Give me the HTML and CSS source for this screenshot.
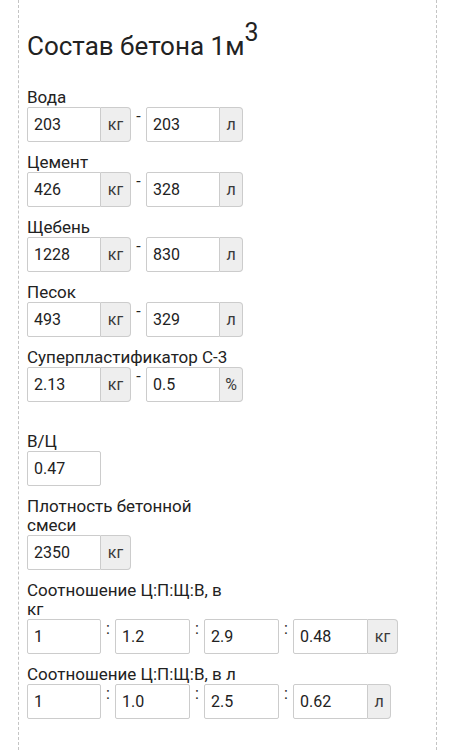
FILE: index.html
```html
<!DOCTYPE html>
<html lang="ru">
<head>
<meta charset="utf-8">
<title>Состав бетона</title>
<link rel="stylesheet" href="styles.css">
</head>
<body>
<div class="page">
  <h1 class="title">Состав бетона 1м<span class="sup">3</span></h1>
  <div class="groups">
    <div class="group">
      <div class="label">Вода</div>
      <div class="row">
        <span class="field">203</span><span class="addon">кг</span>
        <span class="sep">-</span>
        <span class="field">203</span><span class="addon narrow">л</span>
      </div>
    </div>
    <div class="group">
      <div class="label">Цемент</div>
      <div class="row">
        <span class="field">426</span><span class="addon">кг</span>
        <span class="sep">-</span>
        <span class="field">328</span><span class="addon narrow">л</span>
      </div>
    </div>
    <div class="group">
      <div class="label">Щебень</div>
      <div class="row">
        <span class="field">1228</span><span class="addon">кг</span>
        <span class="sep">-</span>
        <span class="field">830</span><span class="addon narrow">л</span>
      </div>
    </div>
    <div class="group">
      <div class="label">Песок</div>
      <div class="row">
        <span class="field">493</span><span class="addon">кг</span>
        <span class="sep">-</span>
        <span class="field">329</span><span class="addon narrow">л</span>
      </div>
    </div>
    <div class="group">
      <div class="label">Суперпластификатор С-3</div>
      <div class="row">
        <span class="field">2.13</span><span class="addon">кг</span>
        <span class="sep">-</span>
        <span class="field">0.5</span><span class="addon narrow">%</span>
      </div>
    </div>
    <div class="group spaced">
      <div class="label">В/Ц</div>
      <div class="row">
        <span class="field solo">0.47</span>
      </div>
    </div>
    <div class="group">
      <div class="label wrap">Плотность бетонной смеси</div>
      <div class="row">
        <span class="field">2350</span><span class="addon">кг</span>
      </div>
    </div>
    <div class="group">
      <div class="label wrap">Соотношение Ц:П:Щ:В, в кг</div>
      <div class="row">
        <span class="field solo">1</span>
        <span class="sep colon">:</span>
        <span class="field solo wide">1.2</span>
        <span class="sep colon">:</span>
        <span class="field solo wide">2.9</span>
        <span class="sep colon">:</span>
        <span class="field wide">0.48</span><span class="addon">кг</span>
      </div>
    </div>
    <div class="group">
      <div class="label">Соотношение Ц:П:Щ:В, в л</div>
      <div class="row">
        <span class="field solo">1</span>
        <span class="sep colon">:</span>
        <span class="field solo wide">1.0</span>
        <span class="sep colon">:</span>
        <span class="field solo wide">2.5</span>
        <span class="sep colon">:</span>
        <span class="field wide">0.62</span><span class="addon narrow">л</span>
      </div>
    </div>
  </div>
</div>
</body>
</html>
```

FILE: styles.css
```css
html, body {
  margin: 0;
  padding: 0;
  background: #ffffff;
}

body {
  font-family: Roboto, "Noto Sans", sans-serif;
  color: #222222;
}

.page {
  margin: 0 17px 0 18px;
  border-left: 1px dashed #c4c4c4;
  border-right: 1px dashed #c4c4c4;
  min-height: 750px;
  box-sizing: border-box;
  padding: 31px 8px 0 8px;
}

.title {
  margin: 0 0 27px 0;
  font-size: 26px;
  line-height: 30px;
  font-weight: 400;
  color: #222222;
}

.sup {
  font-size: 25px;
  line-height: 0;
  vertical-align: 14px;
}

.groups {
  display: flex;
  flex-direction: column;
  gap: 11px;
}

.group.spaced {
  margin-top: 19px;
}

.label {
  font-size: 17px;
  line-height: 19px;
  max-width: 230px;
}

.label.wrap {
  max-width: 212px;
}

.row {
  display: flex;
  align-items: flex-start;
  height: 35px;
}

.field {
  box-sizing: border-box;
  width: 74px;
  height: 35px;
  border: 1px solid #cccccc;
  border-radius: 2px 0 0 2px;
  background: #fff;
  padding: 0 6px;
  font-size: 16px;
  color: #222;
  display: flex;
  align-items: center;
}

.field.solo {
  border-radius: 2px;
}

.field.wide {
  width: 75px;
}

.addon {
  box-sizing: border-box;
  width: 30px;
  height: 35px;
  border: 1px solid #cccccc;
  border-left: 0;
  border-radius: 0 4px 4px 0;
  background: #eeeeee;
  font-size: 16px;
  color: #3a3a3a;
  display: flex;
  align-items: center;
  justify-content: center;
}

.addon.narrow {
  width: 23px;
}

.sep {
  width: 15px;
  font-size: 16px;
  line-height: 19px;
  text-align: center;
  color: #222;
}

.sep.colon {
  width: 14px;
}
```
